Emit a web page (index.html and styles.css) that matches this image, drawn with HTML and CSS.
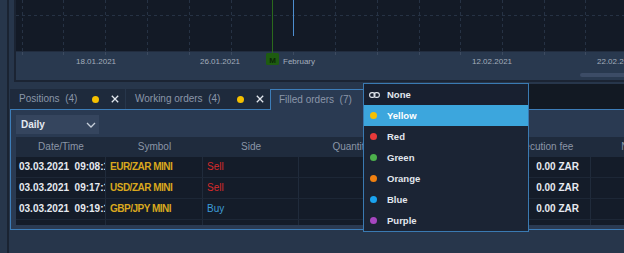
FILE: index.html
```html
<!DOCTYPE html>
<html lang="en">
<head>
  <meta charset="UTF-8">
  <title>Filled orders</title>
  <link rel="stylesheet" href="styles.css">
</head>
<body>
  <div class="app">
    <div class="rail"></div>
    <div class="main">
      <div class="chart">
        <svg width="608" height="80" viewBox="0 0 608 80">
          <rect x="0" y="0" width="608" height="52" fill="#131a26"/>
          <rect x="0" y="52" width="608" height="28" fill="#29394f"/>
          <line x1="0" y1="15.5" x2="608" y2="15.5" class="grid-line"/>
          <g class="grid-line">
            <line x1="6.5" y1="0" x2="6.5" y2="51"/>
            <line x1="47.5" y1="0" x2="47.5" y2="51"/>
            <line x1="89.5" y1="0" x2="89.5" y2="51"/>
            <line x1="131.5" y1="0" x2="131.5" y2="51"/>
            <line x1="173.5" y1="0" x2="173.5" y2="51"/>
            <line x1="215.5" y1="0" x2="215.5" y2="51"/>
            <line x1="319.5" y1="0" x2="319.5" y2="51"/>
            <line x1="361.5" y1="0" x2="361.5" y2="51"/>
            <line x1="403.5" y1="0" x2="403.5" y2="51"/>
            <line x1="444.5" y1="0" x2="444.5" y2="51"/>
            <line x1="486.5" y1="0" x2="486.5" y2="51"/>
            <line x1="528.5" y1="0" x2="528.5" y2="51"/>
            <line x1="569.5" y1="0" x2="569.5" y2="51"/>
          </g>
          <g class="tick">
            <line x1="6.5" y1="52" x2="6.5" y2="55"/>
            <line x1="47.5" y1="52" x2="47.5" y2="55"/>
            <line x1="89.5" y1="52" x2="89.5" y2="55"/>
            <line x1="131.5" y1="52" x2="131.5" y2="55"/>
            <line x1="173.5" y1="52" x2="173.5" y2="55"/>
            <line x1="215.5" y1="52" x2="215.5" y2="55"/>
            <line x1="277.5" y1="52" x2="277.5" y2="55"/>
            <line x1="319.5" y1="52" x2="319.5" y2="55"/>
            <line x1="361.5" y1="52" x2="361.5" y2="55"/>
            <line x1="403.5" y1="52" x2="403.5" y2="55"/>
            <line x1="444.5" y1="52" x2="444.5" y2="55"/>
            <line x1="486.5" y1="52" x2="486.5" y2="55"/>
            <line x1="528.5" y1="52" x2="528.5" y2="55"/>
            <line x1="569.5" y1="52" x2="569.5" y2="55"/>
          </g>
          <line x1="0" y1="51.5" x2="608" y2="51.5" stroke="#222d3f"/>
          <line x1="256.5" y1="0" x2="256.5" y2="53" stroke="#2b6a1c"/>
          <line x1="277.5" y1="0" x2="277.5" y2="36" stroke="#4d8ed0"/>
          <rect x="250" y="53" width="13" height="12" rx="1.5" fill="#1e5c10"/>
          <text x="256.5" y="62.5" class="badge">M</text>
          <text x="60" y="63.5" class="axis">18.01.2021</text>
          <text x="184" y="63.5" class="axis">26.01.2021</text>
          <text x="267" y="63.5" class="axis">February</text>
          <text x="456" y="63.5" class="axis">12.02.2021</text>
          <text x="581" y="63.5" class="axis">22.02.2021</text>
          <rect x="564" y="73" width="60" height="4" rx="2" fill="#3c4c66"/>
        </svg>
      </div>

      <div class="tabs">
        <div class="tab tab-positions">
          <span class="tab-label">Positions&nbsp;&nbsp;(4)</span>
          <span class="tab-dot"></span>
          <svg class="tab-close" width="8" height="8" viewBox="0 0 8 8"><path d="M0.8 0.8L7.2 7.2M7.2 0.8L0.8 7.2"/></svg>
        </div>
        <div class="tab tab-working">
          <span class="tab-label">Working orders&nbsp;&nbsp;(4)</span>
          <span class="tab-dot"></span>
          <svg class="tab-close" width="8" height="8" viewBox="0 0 8 8"><path d="M0.8 0.8L7.2 7.2M7.2 0.8L0.8 7.2"/></svg>
        </div>
        <div class="tab tab-active">
          <span class="tab-label">Filled orders&nbsp;&nbsp;(7)</span>
        </div>
        <div class="tabs-fill"></div>
      </div>

      <div class="panel">
        <div class="select">
          <span>Daily</span>
          <svg width="10" height="6" viewBox="0 0 10 6"><path d="M1 1L5 5L9 1"/></svg>
        </div>
        <div class="grid">
          <div class="row head">
            <div class="cell">Date/Time</div>
            <div class="cell">Symbol</div>
            <div class="cell">Side</div>
            <div class="cell">Quantity</div>
            <div class="cell">Price</div>
            <div class="cell">Execution fee</div>
            <div class="cell">Net P/L</div>
          </div>
          <div class="row">
            <div class="cell date">03.03.2021  09:08:17</div>
            <div class="cell symbol">EUR/ZAR MINI</div>
            <div class="cell sell">Sell</div>
            <div class="cell"></div>
            <div class="cell"></div>
            <div class="cell num">0.00 ZAR</div>
            <div class="cell"></div>
          </div>
          <div class="row">
            <div class="cell date">03.03.2021  09:17:13</div>
            <div class="cell symbol">USD/ZAR MINI</div>
            <div class="cell sell">Sell</div>
            <div class="cell"></div>
            <div class="cell"></div>
            <div class="cell num">0.00 ZAR</div>
            <div class="cell"></div>
          </div>
          <div class="row">
            <div class="cell date">03.03.2021  09:19:11</div>
            <div class="cell symbol">GBP/JPY MINI</div>
            <div class="cell buy">Buy</div>
            <div class="cell"></div>
            <div class="cell"></div>
            <div class="cell num">0.00 ZAR</div>
            <div class="cell"></div>
          </div>
          <div class="row tail">
            <div class="cell"></div>
            <div class="cell"></div>
            <div class="cell"></div>
            <div class="cell"></div>
            <div class="cell"></div>
            <div class="cell"></div>
            <div class="cell"></div>
          </div>
        </div>
      </div>
    </div>
  </div>

  <!-- colour picker opened from the tab -->
  <div class="menu">
    <div class="menu-item none">
      <svg class="menu-icon" width="11" height="6" viewBox="0 0 11 6">
        <rect x="0.6" y="0.6" width="5.4" height="4.8" rx="2.4"/>
        <rect x="5" y="0.6" width="5.4" height="4.8" rx="2.4"/>
      </svg>
      <span>None</span>
    </div>
    <div class="menu-item selected"><span class="dot yellow"></span><span>Yellow</span></div>
    <div class="menu-item"><span class="dot red"></span><span>Red</span></div>
    <div class="menu-item"><span class="dot green"></span><span>Green</span></div>
    <div class="menu-item"><span class="dot orange"></span><span>Orange</span></div>
    <div class="menu-item"><span class="dot blue"></span><span>Blue</span></div>
    <div class="menu-item"><span class="dot purple"></span><span>Purple</span></div>
  </div>
</body>
</html>
```

FILE: styles.css
```css
html,
body {
  margin: 0;
  padding: 0;
}
body {
  position: relative;
  width: 624px;
  height: 253px;
  overflow: hidden;
  background: #27364b;
  font: 10px/1 "Liberation Sans", Arial, sans-serif;
  color: #e4e9f0;
}
.app {
  display: flex;
  height: 100%;
}
.rail {
  width: 7px;
  flex: none;
  border-right: 2px solid #1a2332;
}
.main {
  flex: 1;
  min-width: 0;
  padding-left: 1px;
  overflow: hidden;
}

/* chart */
.chart {
  height: 80px;
  margin-left: 4px;
  border-left: 2px solid #1b2433;
  border-bottom: 2px solid #1b2433;
}
.chart svg {
  display: block;
}
.grid-line {
  stroke: #263244;
  stroke-dasharray: 3 3;
}
.tick {
  stroke: #3d4b60;
}
.axis {
  fill: #a3adbb;
  font-size: 8px;
  font-family: "Liberation Sans", Arial, sans-serif;
}
.badge {
  fill: #0c2606;
  font-size: 8px;
  font-weight: bold;
  text-anchor: middle;
  font-family: "Liberation Sans", Arial, sans-serif;
}

/* tabs */
.tabs {
  display: flex;
  height: 27px;
}
.tab {
  display: flex;
  align-items: center;
  box-sizing: border-box;
  height: 20px;
  margin-top: 7px;
  padding: 0 6px 0 9px;
  background: #1e2a3c;
  color: #8a96a9;
  font-size: 10px;
}
.tab-positions {
  width: 115px;
}
.tab-working {
  width: 144px;
  margin-left: 1px;
}
.tab-label {
  flex: 1;
  white-space: nowrap;
}
.tab-dot {
  width: 7px;
  height: 7px;
  border-radius: 50%;
  background: #f5c000;
  margin-right: 12px;
}
.tab-close {
  display: block;
  stroke: #e2e7ee;
  stroke-width: 1.3;
}
.tab-active {
  position: relative;
  z-index: 1;
  width: 140px;
  height: 21px;
  margin-bottom: -1px;
  background: #2a3a52;
  border: 1px solid #3d7db8;
  border-bottom: none;
  padding-left: 8px;
}
.tabs-fill {
  flex: 1;
  margin-top: 2px;
  background: #121923;
}

/* panel */
.panel {
  border: 1px solid #3d7db8;
  border-right: none;
  background: #2a3a52;
  padding: 5px 0 4px 5px;
}
.select {
  display: flex;
  align-items: center;
  justify-content: space-between;
  box-sizing: border-box;
  width: 83px;
  height: 19px;
  padding: 0 3px 0 5px;
  background: #35455e;
  font-weight: bold;
  color: #e4e9f0;
}
.select svg {
  fill: none;
  stroke: #c7cfda;
  stroke-width: 1.3;
}
.grid {
  margin-top: 3px;
  background: #141c29;
  width: 669px;
}
.row {
  display: grid;
  grid-template-columns: 90px 97px 96px 104px 92px 96px 94px;
  height: 21px;
}
.cell {
  box-sizing: border-box;
  display: flex;
  align-items: center;
  padding: 0 4px;
  border-right: 1px solid #202b3b;
  border-bottom: 1px solid #1d2736;
  white-space: pre;
  overflow: hidden;
  font-weight: bold;
}
.head {
  height: 20px;
  background: #1f2b3d;
}
.head .cell {
  justify-content: center;
  border: none;
  font-weight: normal;
  color: #8b96a7;
}
.tail {
  height: 5px;
}
.tail .cell {
  border-bottom: none;
}
.date {
  padding-left: 3px;
  color: #e6eaf0;
}
.symbol {
  color: #d9a81e;
  letter-spacing: -0.5px;
}
.sell {
  font-weight: normal;
  color: #d62a2a;
}
.buy {
  font-weight: normal;
  color: #3d9bd8;
}
.num {
  justify-content: flex-end;
  padding-right: 11px;
  color: #e6eaf0;
}

/* colour menu */
.menu {
  position: absolute;
  left: 363px;
  top: 83px;
  width: 164px;
  border: 1px solid #3a7ab2;
  background: #1b2434;
  z-index: 2;
}
.menu-item {
  display: flex;
  align-items: center;
  height: 21px;
  padding-left: 6px;
  font-size: 9.5px;
  font-weight: bold;
  color: #e2e7ee;
}
.menu-item span:last-child {
  margin-left: 10px;
}
.none {
  background: #182030;
}
.menu-icon {
  width: 11px;
  fill: none;
  stroke: #e2e7ee;
  stroke-width: 1.1;
  margin-left: -1px;
}
.none span:last-child {
  margin-left: 7px;
}
.selected {
  background: #3ca6dd;
  color: #fff;
}
.dot {
  width: 7px;
  height: 7px;
  border-radius: 50%;
}
.yellow { background: #f5c000; }
.red { background: #e83a3a; }
.green { background: #4cb04c; }
.orange { background: #f08010; }
.blue { background: #1aa3f0; }
.purple { background: #a646c0; }
```
